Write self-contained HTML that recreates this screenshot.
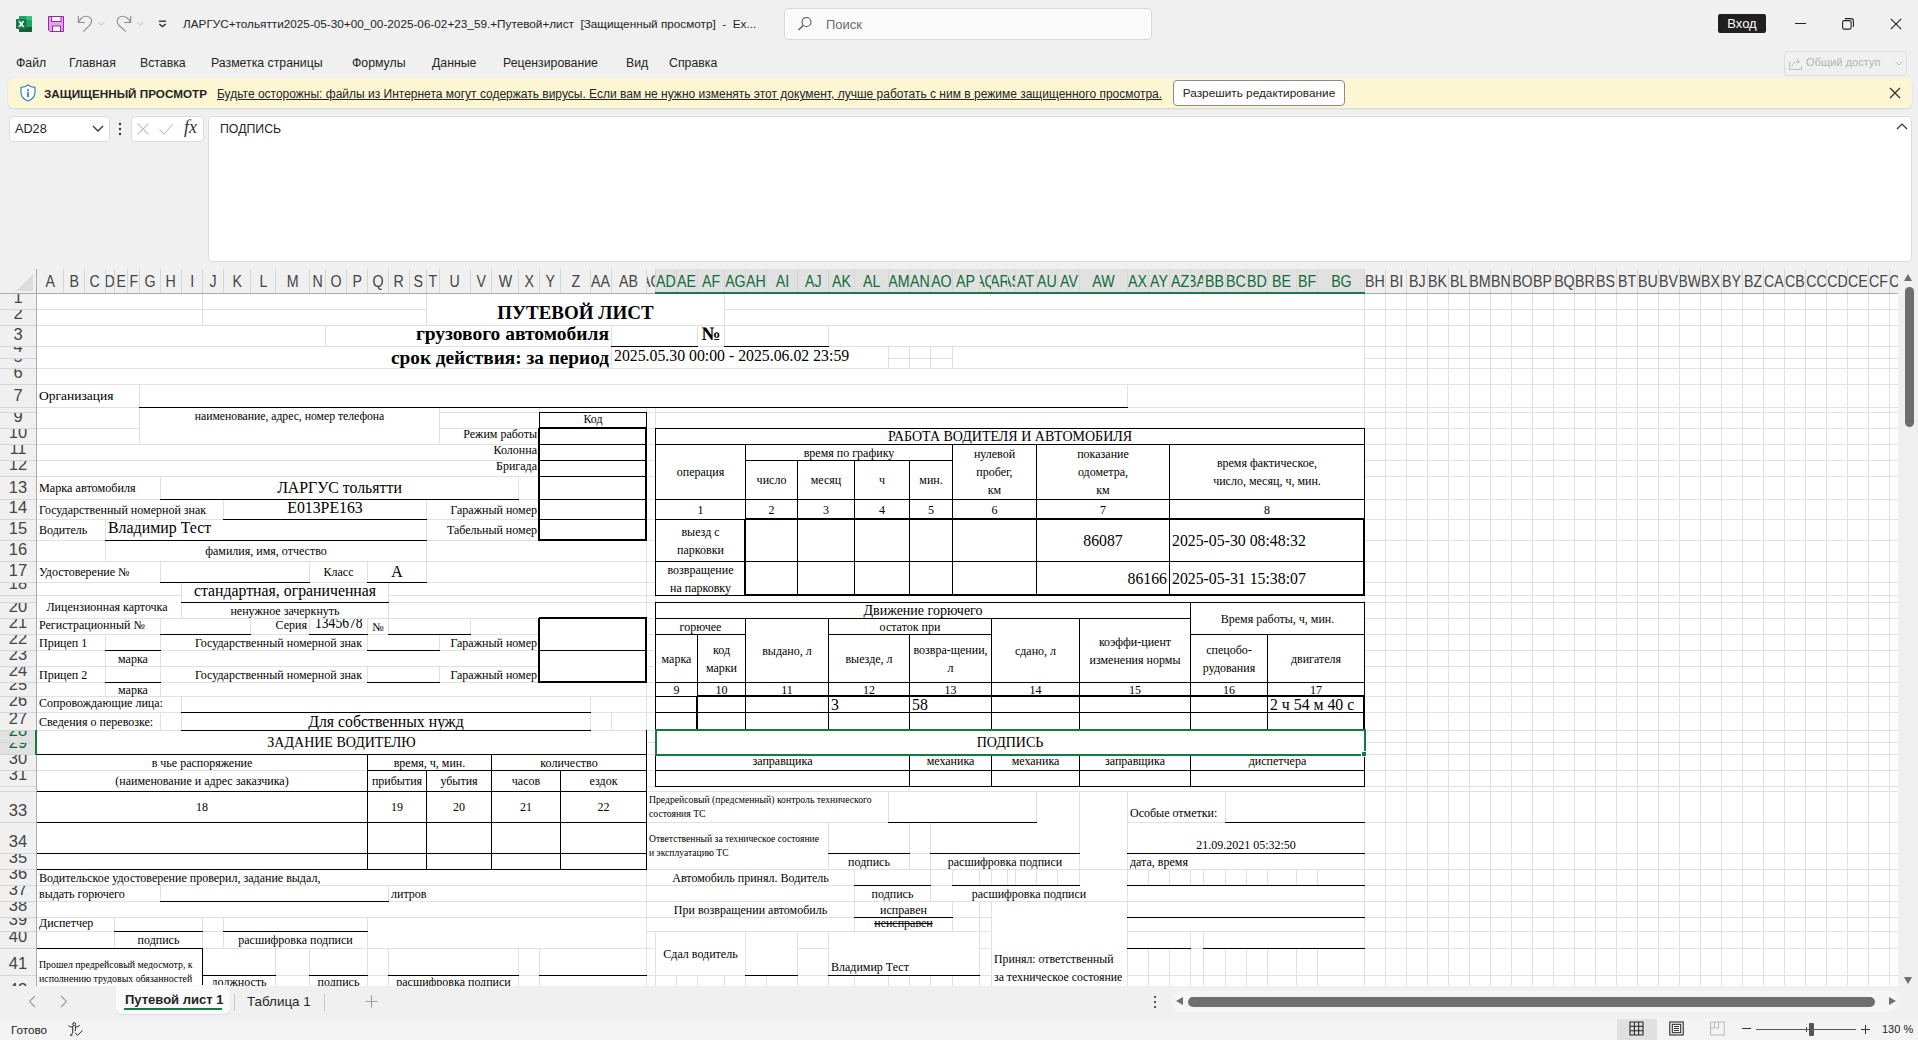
<!DOCTYPE html>
<html><head><meta charset="utf-8">
<style>
*{box-sizing:border-box;margin:0;padding:0}
html,body{width:1918px;height:1040px;overflow:hidden;background:#f0f0f0;font-family:"Liberation Sans",sans-serif;color:#242424}
.a{position:absolute}
#sheetclip{position:absolute;left:37px;top:294px;width:1861px;height:692px;overflow:hidden;background:#fff}
#sheet{position:absolute;left:-37px;top:-294px;width:1918px;height:1040px}
#sheet div{position:absolute}
.gv{top:294px;width:1px;height:700px;background:#e1e1e1}
.gh{left:37px;height:1px;width:1870px;background:#e1e1e1}
.m{background:#fff}
.b{background:#000}
.t{display:flex;font-family:"Liberation Serif",serif;color:#000;white-space:nowrap;line-height:1;overflow:visible}
.t span{display:block}
.ch{position:absolute;top:269px;height:24px;overflow:hidden;display:flex;justify-content:center;align-items:center;font-size:15.8px;color:#444;border-right:1px solid #d6d6d6;padding-top:2px}
.ch span{white-space:nowrap;display:block;transform:scaleX(0.9)}
.ch.sel{background:#e1e1e1;color:#0e6b37}
.rh{position:absolute;left:0;width:36px;overflow:hidden;font-size:16.5px;color:#444;border-bottom:1px solid #d6d6d6}
.rh span{position:absolute;left:0;width:36px;bottom:2px;height:20px;line-height:20px;text-align:center;display:block}
.rh.sel{background:#e1e1e1;color:#0e6b37}
.menu span{position:absolute;top:56px;font-size:12.3px;color:#242424}
</style></head><body>
<!-- title bar -->
<svg class="a" style="left:16px;top:16px" width="16" height="16" viewBox="0 0 16 16">
 <rect x="3" y="0" width="13" height="16" rx="1" fill="#1e9e5e"/>
 <rect x="9.5" y="0" width="6.5" height="4.5" fill="#33c481"/>
 <rect x="3" y="0" width="6.5" height="4.5" fill="#21a366"/>
 <rect x="9.5" y="4.5" width="6.5" height="5.5" fill="#21a366"/>
 <rect x="3" y="11" width="13" height="5" rx="1" fill="#185c37"/>
 <rect x="0" y="2.9" width="10.6" height="10.1" rx="1" fill="#107c41"/>
 <path d="M3 5 L7.6 11 M7.6 5 L3 11" stroke="#fff" stroke-width="1.5"/>
</svg>
<svg class="a" style="left:48px;top:16px" width="16" height="16" viewBox="0 0 16 16">
 <path d="M0.5 0.5 H15.5 V15.5 H2 L0.5 14 Z" fill="#dfa6e6" stroke="#9b27a8" stroke-width="1"/>
 <rect x="3.5" y="0.5" width="9.5" height="5" fill="#fff" stroke="#9b27a8" stroke-width="1"/>
 <rect x="4.5" y="10" width="8" height="5.5" fill="#fff" stroke="#9b27a8" stroke-width="1"/>
</svg>
<svg class="a" style="left:76px;top:15px" width="32" height="18" viewBox="0 0 32 18">
 <path d="M2.3 1 V7.5 H8.9" stroke="#8a8a8a" stroke-width="1.1" fill="none"/>
 <path d="M2.6 7.2 C4.5 3.5 7 1.3 10.2 1.3 C13.3 1.3 15.6 3.5 15.6 6 C15.6 7.5 15 8.8 14 10 L7.3 16.6" stroke="#8a8a8a" stroke-width="1.1" fill="none"/>
 <path d="M22.2 7 L25.3 10.1 L28.4 7" stroke="#b5b5b5" stroke-width="0.9" fill="none"/>
</svg>
<svg class="a" style="left:115px;top:15px" width="32" height="18" viewBox="0 0 32 18">
 <path d="M15.7 1 V7.5 H9.2" stroke="#8a8a8a" stroke-width="1.1" fill="none"/>
 <path d="M15.4 7.2 C13.5 3.5 11 1.3 7.8 1.3 C4.7 1.3 2.2 3.5 2.2 6 C2.2 7.5 2.7 8.8 3.7 10 L10.8 16.6" stroke="#8a8a8a" stroke-width="1.1" fill="none"/>
 <path d="M22.3 7 L25.4 10.1 L28.5 7" stroke="#b5b5b5" stroke-width="0.9" fill="none"/>
</svg>
<svg class="a" style="left:157px;top:19px" width="10" height="10" viewBox="0 0 10 10">
 <path d="M1.9 2.2 H8.9" stroke="#222" stroke-width="1.3"/><path d="M2.4 5.1 L5.5 7.7 L8.7 5.1" stroke="#222" stroke-width="1.3" fill="none"/>
</svg>
<div class="a" style="left:183px;top:17px;font-size:11.75px;color:#242424;white-space:nowrap">ЛАРГУС+тольятти2025-05-30+00_00-2025-06-02+23_59.+Путевой+лист&nbsp; [Защищенный просмотр]&nbsp; -&nbsp; Ex...</div>
<div class="a" style="left:784px;top:8px;width:368px;height:32px;background:#fafafa;border:1px solid #d9d9d9;border-radius:4px"></div>
<svg class="a" style="left:797px;top:16px" width="16" height="16" viewBox="0 0 16 16"><circle cx="9.5" cy="6" r="4.5" stroke="#555" stroke-width="1.1" fill="none"/><path d="M6.3 9.2 L1.5 14" stroke="#555" stroke-width="1.3"/></svg>
<div class="a" style="left:826px;top:17px;font-size:13px;color:#6b6b6b">Поиск</div>
<div class="a" style="left:1718px;top:14px;width:48px;height:19px;background:#202020;border-radius:2px;color:#fff;font-size:13px;text-align:center;line-height:19px">Вход</div>
<div class="a" style="left:1795px;top:23px;width:11px;height:1px;background:#222"></div>
<svg class="a" style="left:1842px;top:18px" width="12" height="12" viewBox="0 0 12 12"><rect x="0.6" y="2.6" width="8.5" height="8.5" rx="1.5" stroke="#222" stroke-width="1.1" fill="none"/><path d="M2.8 0.6 H9 Q11.4 0.6 11.4 3 V9" stroke="#222" stroke-width="1.1" fill="none"/></svg>
<svg class="a" style="left:1890px;top:18px" width="12" height="12" viewBox="0 0 12 12"><path d="M0.8 0.8 L11.2 11.2 M11.2 0.8 L0.8 11.2" stroke="#222" stroke-width="1.1"/></svg>
<!-- menu -->
<div class="menu">
<span style="left:16px">Файл</span><span style="left:69px">Главная</span><span style="left:140px">Вставка</span><span style="left:211px">Разметка страницы</span><span style="left:352px">Формулы</span><span style="left:432px">Данные</span><span style="left:503px">Рецензирование</span><span style="left:626px">Вид</span><span style="left:669px">Справка</span>
</div>
<div class="a" style="left:1784px;top:51px;width:123px;height:25px;border:1px solid #dedede;border-radius:4px"></div>
<svg class="a" style="left:1789px;top:57px" width="14" height="13" viewBox="0 0 14 13"><path d="M0.5 5 V12.5 H12.5 V9" stroke="#bdbdbd" stroke-width="1" fill="none"/><path d="M3 10 C3 6 6 4.5 10 4.5 M7.5 1.5 L10.5 4.5 L7.5 7.5" stroke="#bdbdbd" stroke-width="1" fill="none"/></svg>
<div class="a" style="left:1806px;top:56px;font-size:11.1px;color:#b3b3b3;white-space:nowrap">Общий доступ</div>
<svg class="a" style="left:1895px;top:61px" width="8" height="5" viewBox="0 0 8 5"><path d="M0.5 0.5 L4 4 L7.5 0.5" stroke="#bdbdbd" stroke-width="1" fill="none"/></svg>
<!-- protected view bar -->
<div class="a" style="left:8px;top:78px;width:1904px;height:30px;background:#fdf6d3;border-radius:6px;box-shadow:0 1px 2px rgba(0,0,0,0.12)"></div>
<svg class="a" style="left:20px;top:84px" width="16" height="18" viewBox="0 0 16 18"><path d="M8 1 C5.5 2.8 3.5 3.3 1 3.3 V8.5 C1 13 4 15.5 8 17 C12 15.5 15 13 15 8.5 V3.3 C12.5 3.3 10.5 2.8 8 1 Z" stroke="#2f7fd1" stroke-width="1.2" fill="#fff"/><circle cx="8" cy="6.2" r="1.1" fill="#2f7fd1"/><rect x="7.1" y="8.2" width="1.8" height="5" fill="#2f7fd1"/></svg>
<div class="a" style="left:44px;top:87px;font-size:11.7px;font-weight:bold;color:#242424;white-space:nowrap">ЗАЩИЩЕННЫЙ ПРОСМОТР</div>
<div class="a" style="left:217px;top:87px;font-size:12px;color:#242424;text-decoration:underline;white-space:nowrap">Будьте осторожны: файлы из Интернета могут содержать вирусы. Если вам не нужно изменять этот документ, лучше работать с ним в режиме защищенного просмотра.</div>
<div class="a" style="left:1173px;top:80px;width:172px;height:26px;background:#fff;border:1px solid #8a8a8a;border-radius:4px;font-size:11.8px;color:#242424;text-align:center;line-height:24px;white-space:nowrap">Разрешить редактирование</div>
<svg class="a" style="left:1889px;top:87px" width="12" height="12" viewBox="0 0 12 12"><path d="M1 1 L11 11 M11 1 L1 11" stroke="#333" stroke-width="1.3"/></svg>
<!-- formula bar -->
<div class="a" style="left:9px;top:116px;width:101px;height:26px;background:#fff;border:1px solid #dcdcdc;border-radius:4px"></div>
<div class="a" style="left:15px;top:122px;font-size:12.7px;color:#242424">AD28</div>
<svg class="a" style="left:92px;top:125px" width="12" height="8" viewBox="0 0 12 8"><path d="M1 1 L6 6 L11 1" stroke="#333" stroke-width="1.3" fill="none"/></svg>
<svg class="a" style="left:118px;top:121px" width="4" height="16" viewBox="0 0 4 16"><circle cx="2" cy="3" r="1.2" fill="#333"/><circle cx="2" cy="8" r="1.2" fill="#333"/><circle cx="2" cy="13" r="1.2" fill="#333"/></svg>
<div class="a" style="left:131px;top:116px;width:73px;height:26px;background:#fff;border:1px solid #dcdcdc;border-radius:4px"></div>
<svg class="a" style="left:136px;top:122px" width="14" height="14" viewBox="0 0 14 14"><path d="M1.5 1.5 L12.5 12.5 M12.5 1.5 L1.5 12.5" stroke="#c4c4c4" stroke-width="1.1"/></svg>
<svg class="a" style="left:158px;top:122px" width="16" height="14" viewBox="0 0 16 14"><path d="M1.5 7.5 L6 12 L15 2" stroke="#c4c4c4" stroke-width="1.1" fill="none"/></svg>
<div class="a" style="left:184px;top:117px;font-family:'Liberation Serif',serif;font-style:italic;font-size:18px;color:#333">fx</div>
<div class="a" style="left:208px;top:116px;width:1704px;height:146px;background:#fff;border:1px solid #dcdcdc;border-radius:4px 4px 4px 4px"></div>
<div class="a" style="left:220px;top:122px;font-size:12.3px;color:#242424">ПОДПИСЬ</div>
<svg class="a" style="left:1896px;top:122px" width="12" height="8" viewBox="0 0 12 8"><path d="M1 7 L6 2 L11 7" stroke="#333" stroke-width="1.2" fill="none"/></svg>
<!-- headers -->
<div class="a" style="left:0;top:269px;width:1898px;height:25px;background:#f0f0f0"></div>
<svg class="a" style="left:16px;top:274px" width="17" height="17" viewBox="0 0 17 17"><path d="M17 0 V17 H0 Z" fill="#dcdcdc"/></svg>
<div class="ch" style="left:37px;width:27px"><span>A</span></div>
<div class="ch" style="left:64px;width:21px"><span>B</span></div>
<div class="ch" style="left:85px;width:21px"><span>C</span></div>
<div class="ch" style="left:106px;width:9px"><span>D</span></div>
<div class="ch" style="left:115px;width:13px"><span>E</span></div>
<div class="ch" style="left:128px;width:12px"><span>F</span></div>
<div class="ch" style="left:140px;width:21px"><span>G</span></div>
<div class="ch" style="left:161px;width:21px"><span>H</span></div>
<div class="ch" style="left:182px;width:21px"><span>I</span></div>
<div class="ch" style="left:203px;width:21px"><span>J</span></div>
<div class="ch" style="left:224px;width:27px"><span>K</span></div>
<div class="ch" style="left:251px;width:25px"><span>L</span></div>
<div class="ch" style="left:276px;width:34px"><span>M</span></div>
<div class="ch" style="left:310px;width:16px"><span>N</span></div>
<div class="ch" style="left:326px;width:21px"><span>O</span></div>
<div class="ch" style="left:347px;width:21px"><span>P</span></div>
<div class="ch" style="left:368px;width:21px"><span>Q</span></div>
<div class="ch" style="left:389px;width:21px"><span>R</span></div>
<div class="ch" style="left:410px;width:17px"><span>S</span></div>
<div class="ch" style="left:427px;width:13px"><span>T</span></div>
<div class="ch" style="left:440px;width:31px"><span>U</span></div>
<div class="ch" style="left:471px;width:21px"><span>V</span></div>
<div class="ch" style="left:492px;width:27px"><span>W</span></div>
<div class="ch" style="left:519px;width:21px"><span>X</span></div>
<div class="ch" style="left:540px;width:21px"><span>Y</span></div>
<div class="ch" style="left:561px;width:30px"><span>Z</span></div>
<div class="ch" style="left:591px;width:21px"><span>AA</span></div>
<div class="ch" style="left:612px;width:35px"><span>AB</span></div>
<div class="ch" style="left:647px;width:9px"><span>AC</span></div>
<div class="ch sel" style="left:656px;width:21px"><span>AD</span></div>
<div class="ch sel" style="left:677px;width:21px"><span>AE</span></div>
<div class="ch sel" style="left:698px;width:27px"><span>AF</span></div>
<div class="ch sel" style="left:725px;width:21px"><span>AG</span></div>
<div class="ch sel" style="left:746px;width:21px"><span>AH</span></div>
<div class="ch sel" style="left:767px;width:31px"><span>AI</span></div>
<div class="ch sel" style="left:798px;width:31px"><span>AJ</span></div>
<div class="ch sel" style="left:829px;width:26px"><span>AK</span></div>
<div class="ch sel" style="left:855px;width:34px"><span>AL</span></div>
<div class="ch sel" style="left:889px;width:21px"><span>AM</span></div>
<div class="ch sel" style="left:910px;width:21px"><span>AN</span></div>
<div class="ch sel" style="left:931px;width:22px"><span>AO</span></div>
<div class="ch sel" style="left:953px;width:27px"><span>AP</span></div>
<div class="ch sel" style="left:980px;width:12px"><span>AQ</span></div>
<div class="ch sel" style="left:992px;width:16px"><span>AR</span></div>
<div class="ch sel" style="left:1008px;width:8px"><span>AS</span></div>
<div class="ch sel" style="left:1016px;width:21px"><span>AT</span></div>
<div class="ch sel" style="left:1037px;width:21px"><span>AU</span></div>
<div class="ch sel" style="left:1058px;width:22px"><span>AV</span></div>
<div class="ch sel" style="left:1080px;width:48px"><span>AW</span></div>
<div class="ch sel" style="left:1128px;width:21px"><span>AX</span></div>
<div class="ch sel" style="left:1149px;width:21px"><span>AY</span></div>
<div class="ch sel" style="left:1170px;width:21px"><span>AZ</span></div>
<div class="ch sel" style="left:1191px;width:13px"><span>BA</span></div>
<div class="ch sel" style="left:1204px;width:22px"><span>BB</span></div>
<div class="ch sel" style="left:1226px;width:21px"><span>BC</span></div>
<div class="ch sel" style="left:1247px;width:21px"><span>BD</span></div>
<div class="ch sel" style="left:1268px;width:29px"><span>BE</span></div>
<div class="ch sel" style="left:1297px;width:21px"><span>BF</span></div>
<div class="ch sel" style="left:1318px;width:47px"><span>BG</span></div>
<div class="ch" style="left:1365px;width:21px"><span>BH</span></div>
<div class="ch" style="left:1386px;width:21px"><span>BI</span></div>
<div class="ch" style="left:1407px;width:21px"><span>BJ</span></div>
<div class="ch" style="left:1428px;width:21px"><span>BK</span></div>
<div class="ch" style="left:1449px;width:21px"><span>BL</span></div>
<div class="ch" style="left:1470px;width:21px"><span>BM</span></div>
<div class="ch" style="left:1491px;width:21px"><span>BN</span></div>
<div class="ch" style="left:1512px;width:21px"><span>BO</span></div>
<div class="ch" style="left:1533px;width:21px"><span>BP</span></div>
<div class="ch" style="left:1554px;width:21px"><span>BQ</span></div>
<div class="ch" style="left:1575px;width:21px"><span>BR</span></div>
<div class="ch" style="left:1596px;width:21px"><span>BS</span></div>
<div class="ch" style="left:1617px;width:21px"><span>BT</span></div>
<div class="ch" style="left:1638px;width:21px"><span>BU</span></div>
<div class="ch" style="left:1659px;width:21px"><span>BV</span></div>
<div class="ch" style="left:1680px;width:21px"><span>BW</span></div>
<div class="ch" style="left:1701px;width:21px"><span>BX</span></div>
<div class="ch" style="left:1722px;width:21px"><span>BY</span></div>
<div class="ch" style="left:1743px;width:21px"><span>BZ</span></div>
<div class="ch" style="left:1764px;width:21px"><span>CA</span></div>
<div class="ch" style="left:1785px;width:21px"><span>CB</span></div>
<div class="ch" style="left:1806px;width:21px"><span>CC</span></div>
<div class="ch" style="left:1827px;width:21px"><span>CD</span></div>
<div class="ch" style="left:1848px;width:21px"><span>CE</span></div>
<div class="ch" style="left:1869px;width:21px"><span>CF</span></div>
<div class="ch" style="left:1890px;width:21px"><span>CG</span></div>
<div class="a" style="left:0;top:293px;width:1898px;height:1px;background:#ababab"></div>
<div class="a" style="left:655px;top:292px;width:710px;height:2px;background:#107c41"></div>
<div class="rh" style="top:294px;height:16px"><span>1</span></div>
<div class="rh" style="top:310px;height:16px"><span>2</span></div>
<div class="rh" style="top:326px;height:21px"><span>3</span></div>
<div class="rh" style="top:347px;height:12px"><span>4</span></div>
<div class="rh" style="top:359px;height:10px"><span>5</span></div>
<div class="rh" style="top:369px;height:16px"><span>6</span></div>
<div class="rh" style="top:385px;height:23px"><span>7</span></div>
<div class="rh" style="top:408px;height:5px"><span>8</span></div>
<div class="rh" style="top:413px;height:16px"><span>9</span></div>
<div class="rh" style="top:429px;height:16px"><span>10</span></div>
<div class="rh" style="top:445px;height:16px"><span>11</span></div>
<div class="rh" style="top:461px;height:16px"><span>12</span></div>
<div class="rh" style="top:477px;height:23px"><span>13</span></div>
<div class="rh" style="top:500px;height:20px"><span>14</span></div>
<div class="rh" style="top:520px;height:21px"><span>15</span></div>
<div class="rh" style="top:541px;height:21px"><span>16</span></div>
<div class="rh" style="top:562px;height:21px"><span>17</span></div>
<div class="rh" style="top:583px;height:13px"><span>18</span></div>
<div class="rh" style="top:596px;height:7px"><span>19</span></div>
<div class="rh" style="top:603px;height:16px"><span>20</span></div>
<div class="rh" style="top:619px;height:16px"><span>21</span></div>
<div class="rh" style="top:635px;height:16px"><span>22</span></div>
<div class="rh" style="top:651px;height:16px"><span>23</span></div>
<div class="rh" style="top:667px;height:16px"><span>24</span></div>
<div class="rh" style="top:683px;height:14px"><span>25</span></div>
<div class="rh" style="top:697px;height:16px"><span>26</span></div>
<div class="rh" style="top:713px;height:18px"><span>27</span></div>
<div class="rh sel" style="top:731px;height:12px"><span>28</span></div>
<div class="rh sel" style="top:743px;height:12px"><span>29</span></div>
<div class="rh" style="top:755px;height:16px"><span>30</span></div>
<div class="rh" style="top:771px;height:16px"><span>31</span></div>
<div class="rh" style="top:787px;height:5px"><span>32</span></div>
<div class="rh" style="top:792px;height:31px"><span>33</span></div>
<div class="rh" style="top:823px;height:31px"><span>34</span></div>
<div class="rh" style="top:854px;height:16px"><span>35</span></div>
<div class="rh" style="top:870px;height:16px"><span>36</span></div>
<div class="rh" style="top:886px;height:16px"><span>37</span></div>
<div class="rh" style="top:902px;height:16px"><span>38</span></div>
<div class="rh" style="top:918px;height:14px"><span>39</span></div>
<div class="rh" style="top:932px;height:17px"><span>40</span></div>
<div class="rh" style="top:949px;height:27px"><span>41</span></div>
<div class="rh" style="top:976px;height:26px"><span>42</span></div>
<div class="a" style="left:36px;top:269px;width:1px;height:717px;background:#ababab"></div>
<div class="a" style="left:35px;top:730px;width:2px;height:25px;background:#107c41"></div>
<div id="sheetclip"><div id="sheet">
<div class="gv" style="left:63px"></div>
<div class="gv" style="left:84px"></div>
<div class="gv" style="left:105px"></div>
<div class="gv" style="left:114px"></div>
<div class="gv" style="left:127px"></div>
<div class="gv" style="left:139px"></div>
<div class="gv" style="left:160px"></div>
<div class="gv" style="left:181px"></div>
<div class="gv" style="left:202px"></div>
<div class="gv" style="left:223px"></div>
<div class="gv" style="left:250px"></div>
<div class="gv" style="left:275px"></div>
<div class="gv" style="left:309px"></div>
<div class="gv" style="left:325px"></div>
<div class="gv" style="left:346px"></div>
<div class="gv" style="left:367px"></div>
<div class="gv" style="left:388px"></div>
<div class="gv" style="left:409px"></div>
<div class="gv" style="left:426px"></div>
<div class="gv" style="left:439px"></div>
<div class="gv" style="left:470px"></div>
<div class="gv" style="left:491px"></div>
<div class="gv" style="left:518px"></div>
<div class="gv" style="left:539px"></div>
<div class="gv" style="left:560px"></div>
<div class="gv" style="left:590px"></div>
<div class="gv" style="left:611px"></div>
<div class="gv" style="left:646px"></div>
<div class="gv" style="left:655px"></div>
<div class="gv" style="left:676px"></div>
<div class="gv" style="left:697px"></div>
<div class="gv" style="left:724px"></div>
<div class="gv" style="left:745px"></div>
<div class="gv" style="left:766px"></div>
<div class="gv" style="left:797px"></div>
<div class="gv" style="left:828px"></div>
<div class="gv" style="left:854px"></div>
<div class="gv" style="left:888px"></div>
<div class="gv" style="left:909px"></div>
<div class="gv" style="left:930px"></div>
<div class="gv" style="left:952px"></div>
<div class="gv" style="left:979px"></div>
<div class="gv" style="left:991px"></div>
<div class="gv" style="left:1007px"></div>
<div class="gv" style="left:1015px"></div>
<div class="gv" style="left:1036px"></div>
<div class="gv" style="left:1057px"></div>
<div class="gv" style="left:1079px"></div>
<div class="gv" style="left:1127px"></div>
<div class="gv" style="left:1148px"></div>
<div class="gv" style="left:1169px"></div>
<div class="gv" style="left:1190px"></div>
<div class="gv" style="left:1203px"></div>
<div class="gv" style="left:1225px"></div>
<div class="gv" style="left:1246px"></div>
<div class="gv" style="left:1267px"></div>
<div class="gv" style="left:1296px"></div>
<div class="gv" style="left:1317px"></div>
<div class="gv" style="left:1364px"></div>
<div class="gv" style="left:1385px"></div>
<div class="gv" style="left:1406px"></div>
<div class="gv" style="left:1427px"></div>
<div class="gv" style="left:1448px"></div>
<div class="gv" style="left:1469px"></div>
<div class="gv" style="left:1490px"></div>
<div class="gv" style="left:1511px"></div>
<div class="gv" style="left:1532px"></div>
<div class="gv" style="left:1553px"></div>
<div class="gv" style="left:1574px"></div>
<div class="gv" style="left:1595px"></div>
<div class="gv" style="left:1616px"></div>
<div class="gv" style="left:1637px"></div>
<div class="gv" style="left:1658px"></div>
<div class="gv" style="left:1679px"></div>
<div class="gv" style="left:1700px"></div>
<div class="gv" style="left:1721px"></div>
<div class="gv" style="left:1742px"></div>
<div class="gv" style="left:1763px"></div>
<div class="gv" style="left:1784px"></div>
<div class="gv" style="left:1805px"></div>
<div class="gv" style="left:1826px"></div>
<div class="gv" style="left:1847px"></div>
<div class="gv" style="left:1868px"></div>
<div class="gv" style="left:1889px"></div>
<div class="gh" style="top:309px"></div>
<div class="gh" style="top:325px"></div>
<div class="gh" style="top:346px"></div>
<div class="gh" style="top:358px"></div>
<div class="gh" style="top:368px"></div>
<div class="gh" style="top:384px"></div>
<div class="gh" style="top:407px"></div>
<div class="gh" style="top:412px"></div>
<div class="gh" style="top:428px"></div>
<div class="gh" style="top:444px"></div>
<div class="gh" style="top:460px"></div>
<div class="gh" style="top:476px"></div>
<div class="gh" style="top:499px"></div>
<div class="gh" style="top:519px"></div>
<div class="gh" style="top:540px"></div>
<div class="gh" style="top:561px"></div>
<div class="gh" style="top:582px"></div>
<div class="gh" style="top:595px"></div>
<div class="gh" style="top:602px"></div>
<div class="gh" style="top:618px"></div>
<div class="gh" style="top:634px"></div>
<div class="gh" style="top:650px"></div>
<div class="gh" style="top:666px"></div>
<div class="gh" style="top:682px"></div>
<div class="gh" style="top:696px"></div>
<div class="gh" style="top:712px"></div>
<div class="gh" style="top:730px"></div>
<div class="gh" style="top:742px"></div>
<div class="gh" style="top:754px"></div>
<div class="gh" style="top:770px"></div>
<div class="gh" style="top:786px"></div>
<div class="gh" style="top:791px"></div>
<div class="gh" style="top:822px"></div>
<div class="gh" style="top:853px"></div>
<div class="gh" style="top:869px"></div>
<div class="gh" style="top:885px"></div>
<div class="gh" style="top:901px"></div>
<div class="gh" style="top:917px"></div>
<div class="gh" style="top:931px"></div>
<div class="gh" style="top:948px"></div>
<div class="gh" style="top:975px"></div>
<div class="m" style="left:37px;top:294px;width:165px;height:15px"></div>
<div class="m" style="left:37px;top:310px;width:165px;height:15px"></div>
<div class="m" style="left:203px;top:294px;width:223px;height:15px"></div>
<div class="m" style="left:203px;top:310px;width:223px;height:15px"></div>
<div class="m" style="left:427px;top:294px;width:297px;height:31px"></div>
<div class="m" style="left:725px;top:294px;width:639px;height:15px"></div>
<div class="m" style="left:725px;top:310px;width:639px;height:15px"></div>
<div class="m" style="left:37px;top:326px;width:288px;height:20px"></div>
<div class="m" style="left:326px;top:326px;width:285px;height:20px"></div>
<div class="m" style="left:612px;top:326px;width:85px;height:20px"></div>
<div class="m" style="left:725px;top:326px;width:103px;height:20px"></div>
<div class="m" style="left:829px;top:326px;width:535px;height:20px"></div>
<div class="m" style="left:37px;top:347px;width:574px;height:21px"></div>
<div class="m" style="left:612px;top:347px;width:276px;height:21px"></div>
<div class="m" style="left:953px;top:347px;width:411px;height:21px"></div>
<div class="m" style="left:37px;top:369px;width:1327px;height:15px"></div>
<div class="m" style="left:37px;top:385px;width:102px;height:22px"></div>
<div class="m" style="left:140px;top:385px;width:987px;height:22px"></div>
<div class="m" style="left:1128px;top:385px;width:236px;height:22px"></div>
<div class="m" style="left:37px;top:408px;width:102px;height:20px"></div>
<div class="m" style="left:37px;top:429px;width:102px;height:15px"></div>
<div class="m" style="left:140px;top:408px;width:299px;height:36px"></div>
<div class="m" style="left:440px;top:408px;width:99px;height:4px"></div>
<div class="m" style="left:440px;top:413px;width:99px;height:15px"></div>
<div class="m" style="left:440px;top:429px;width:99px;height:15px"></div>
<div class="m" style="left:540px;top:408px;width:106px;height:4px"></div>
<div class="m" style="left:540px;top:413px;width:106px;height:15px"></div>
<div class="m" style="left:656px;top:408px;width:708px;height:4px"></div>
<div class="m" style="left:656px;top:413px;width:708px;height:15px"></div>
<div class="m" style="left:540px;top:429px;width:106px;height:15px"></div>
<div class="m" style="left:540px;top:445px;width:106px;height:15px"></div>
<div class="m" style="left:540px;top:461px;width:106px;height:15px"></div>
<div class="m" style="left:540px;top:477px;width:106px;height:22px"></div>
<div class="m" style="left:540px;top:500px;width:106px;height:19px"></div>
<div class="m" style="left:540px;top:520px;width:106px;height:20px"></div>
<div class="m" style="left:656px;top:429px;width:708px;height:15px"></div>
<div class="m" style="left:37px;top:445px;width:502px;height:15px"></div>
<div class="m" style="left:37px;top:461px;width:502px;height:15px"></div>
<div class="m" style="left:656px;top:445px;width:89px;height:54px"></div>
<div class="m" style="left:746px;top:445px;width:206px;height:15px"></div>
<div class="m" style="left:746px;top:461px;width:51px;height:38px"></div>
<div class="m" style="left:798px;top:461px;width:56px;height:38px"></div>
<div class="m" style="left:855px;top:461px;width:54px;height:38px"></div>
<div class="m" style="left:910px;top:461px;width:42px;height:38px"></div>
<div class="m" style="left:953px;top:445px;width:83px;height:54px"></div>
<div class="m" style="left:1037px;top:445px;width:132px;height:54px"></div>
<div class="m" style="left:1170px;top:445px;width:194px;height:54px"></div>
<div class="m" style="left:656px;top:500px;width:89px;height:19px"></div>
<div class="m" style="left:746px;top:500px;width:51px;height:19px"></div>
<div class="m" style="left:798px;top:500px;width:56px;height:19px"></div>
<div class="m" style="left:855px;top:500px;width:54px;height:19px"></div>
<div class="m" style="left:910px;top:500px;width:42px;height:19px"></div>
<div class="m" style="left:953px;top:500px;width:83px;height:19px"></div>
<div class="m" style="left:1037px;top:500px;width:132px;height:19px"></div>
<div class="m" style="left:1170px;top:500px;width:194px;height:19px"></div>
<div class="m" style="left:656px;top:520px;width:89px;height:41px"></div>
<div class="m" style="left:746px;top:520px;width:51px;height:41px"></div>
<div class="m" style="left:798px;top:520px;width:56px;height:41px"></div>
<div class="m" style="left:855px;top:520px;width:54px;height:41px"></div>
<div class="m" style="left:910px;top:520px;width:42px;height:41px"></div>
<div class="m" style="left:953px;top:520px;width:83px;height:41px"></div>
<div class="m" style="left:1037px;top:520px;width:132px;height:41px"></div>
<div class="m" style="left:1170px;top:520px;width:194px;height:41px"></div>
<div class="m" style="left:656px;top:562px;width:89px;height:33px"></div>
<div class="m" style="left:746px;top:562px;width:51px;height:33px"></div>
<div class="m" style="left:798px;top:562px;width:56px;height:33px"></div>
<div class="m" style="left:855px;top:562px;width:54px;height:33px"></div>
<div class="m" style="left:910px;top:562px;width:42px;height:33px"></div>
<div class="m" style="left:953px;top:562px;width:83px;height:33px"></div>
<div class="m" style="left:1037px;top:562px;width:132px;height:33px"></div>
<div class="m" style="left:1170px;top:562px;width:194px;height:33px"></div>
<div class="m" style="left:656px;top:596px;width:708px;height:6px"></div>
<div class="m" style="left:37px;top:477px;width:123px;height:22px"></div>
<div class="m" style="left:161px;top:477px;width:357px;height:22px"></div>
<div class="m" style="left:37px;top:500px;width:186px;height:19px"></div>
<div class="m" style="left:224px;top:500px;width:202px;height:19px"></div>
<div class="m" style="left:427px;top:500px;width:112px;height:19px"></div>
<div class="m" style="left:37px;top:520px;width:68px;height:20px"></div>
<div class="m" style="left:106px;top:520px;width:320px;height:20px"></div>
<div class="m" style="left:427px;top:520px;width:112px;height:20px"></div>
<div class="m" style="left:37px;top:541px;width:68px;height:20px"></div>
<div class="m" style="left:106px;top:541px;width:320px;height:20px"></div>
<div class="m" style="left:427px;top:541px;width:219px;height:20px"></div>
<div class="m" style="left:37px;top:562px;width:123px;height:20px"></div>
<div class="m" style="left:161px;top:562px;width:148px;height:20px"></div>
<div class="m" style="left:310px;top:562px;width:57px;height:20px"></div>
<div class="m" style="left:368px;top:562px;width:58px;height:20px"></div>
<div class="m" style="left:427px;top:562px;width:219px;height:20px"></div>
<div class="m" style="left:37px;top:583px;width:144px;height:12px"></div>
<div class="m" style="left:182px;top:583px;width:206px;height:19px"></div>
<div class="m" style="left:389px;top:583px;width:257px;height:12px"></div>
<div class="m" style="left:389px;top:596px;width:257px;height:6px"></div>
<div class="m" style="left:37px;top:596px;width:144px;height:22px"></div>
<div class="m" style="left:182px;top:603px;width:206px;height:15px"></div>
<div class="m" style="left:389px;top:603px;width:257px;height:15px"></div>
<div class="m" style="left:37px;top:619px;width:123px;height:15px"></div>
<div class="m" style="left:161px;top:619px;width:89px;height:15px"></div>
<div class="m" style="left:251px;top:619px;width:58px;height:15px"></div>
<div class="m" style="left:310px;top:619px;width:57px;height:15px"></div>
<div class="m" style="left:389px;top:619px;width:81px;height:15px"></div>
<div class="m" style="left:471px;top:619px;width:68px;height:15px"></div>
<div class="m" style="left:540px;top:619px;width:106px;height:31px"></div>
<div class="m" style="left:37px;top:635px;width:68px;height:15px"></div>
<div class="m" style="left:106px;top:635px;width:54px;height:15px"></div>
<div class="m" style="left:161px;top:635px;width:206px;height:15px"></div>
<div class="m" style="left:368px;top:635px;width:71px;height:15px"></div>
<div class="m" style="left:440px;top:635px;width:99px;height:15px"></div>
<div class="m" style="left:37px;top:651px;width:68px;height:15px"></div>
<div class="m" style="left:106px;top:651px;width:54px;height:15px"></div>
<div class="m" style="left:161px;top:651px;width:378px;height:15px"></div>
<div class="m" style="left:540px;top:651px;width:106px;height:31px"></div>
<div class="m" style="left:37px;top:667px;width:68px;height:15px"></div>
<div class="m" style="left:106px;top:667px;width:54px;height:15px"></div>
<div class="m" style="left:161px;top:667px;width:206px;height:15px"></div>
<div class="m" style="left:368px;top:667px;width:71px;height:15px"></div>
<div class="m" style="left:440px;top:667px;width:99px;height:15px"></div>
<div class="m" style="left:37px;top:683px;width:68px;height:13px"></div>
<div class="m" style="left:106px;top:683px;width:54px;height:13px"></div>
<div class="m" style="left:161px;top:683px;width:485px;height:13px"></div>
<div class="m" style="left:37px;top:697px;width:144px;height:15px"></div>
<div class="m" style="left:182px;top:697px;width:408px;height:15px"></div>
<div class="m" style="left:591px;top:697px;width:55px;height:15px"></div>
<div class="m" style="left:37px;top:713px;width:123px;height:17px"></div>
<div class="m" style="left:182px;top:713px;width:408px;height:17px"></div>
<div class="m" style="left:656px;top:603px;width:534px;height:15px"></div>
<div class="m" style="left:1191px;top:603px;width:173px;height:31px"></div>
<div class="m" style="left:656px;top:619px;width:89px;height:15px"></div>
<div class="m" style="left:746px;top:619px;width:82px;height:63px"></div>
<div class="m" style="left:829px;top:619px;width:162px;height:15px"></div>
<div class="m" style="left:992px;top:619px;width:87px;height:63px"></div>
<div class="m" style="left:1080px;top:619px;width:110px;height:63px"></div>
<div class="m" style="left:1191px;top:635px;width:76px;height:47px"></div>
<div class="m" style="left:1268px;top:635px;width:96px;height:47px"></div>
<div class="m" style="left:656px;top:635px;width:41px;height:47px"></div>
<div class="m" style="left:698px;top:635px;width:47px;height:47px"></div>
<div class="m" style="left:829px;top:635px;width:80px;height:47px"></div>
<div class="m" style="left:910px;top:635px;width:81px;height:47px"></div>
<div class="m" style="left:656px;top:683px;width:41px;height:13px"></div>
<div class="m" style="left:698px;top:683px;width:47px;height:13px"></div>
<div class="m" style="left:746px;top:683px;width:82px;height:13px"></div>
<div class="m" style="left:829px;top:683px;width:80px;height:13px"></div>
<div class="m" style="left:910px;top:683px;width:81px;height:13px"></div>
<div class="m" style="left:992px;top:683px;width:87px;height:13px"></div>
<div class="m" style="left:1080px;top:683px;width:110px;height:13px"></div>
<div class="m" style="left:1191px;top:683px;width:76px;height:13px"></div>
<div class="m" style="left:1268px;top:683px;width:96px;height:13px"></div>
<div class="m" style="left:656px;top:697px;width:41px;height:15px"></div>
<div class="m" style="left:698px;top:697px;width:47px;height:15px"></div>
<div class="m" style="left:746px;top:697px;width:82px;height:15px"></div>
<div class="m" style="left:829px;top:697px;width:80px;height:15px"></div>
<div class="m" style="left:910px;top:697px;width:81px;height:15px"></div>
<div class="m" style="left:992px;top:697px;width:87px;height:15px"></div>
<div class="m" style="left:1080px;top:697px;width:110px;height:15px"></div>
<div class="m" style="left:1191px;top:697px;width:76px;height:15px"></div>
<div class="m" style="left:1268px;top:697px;width:96px;height:15px"></div>
<div class="m" style="left:656px;top:713px;width:41px;height:17px"></div>
<div class="m" style="left:698px;top:713px;width:47px;height:17px"></div>
<div class="m" style="left:746px;top:713px;width:82px;height:17px"></div>
<div class="m" style="left:829px;top:713px;width:80px;height:17px"></div>
<div class="m" style="left:910px;top:713px;width:81px;height:17px"></div>
<div class="m" style="left:992px;top:713px;width:87px;height:17px"></div>
<div class="m" style="left:1080px;top:713px;width:110px;height:17px"></div>
<div class="m" style="left:1191px;top:713px;width:76px;height:17px"></div>
<div class="m" style="left:1268px;top:713px;width:96px;height:17px"></div>
<div class="m" style="left:656px;top:731px;width:708px;height:23px"></div>
<div class="m" style="left:37px;top:731px;width:609px;height:23px"></div>
<div class="m" style="left:37px;top:755px;width:330px;height:15px"></div>
<div class="m" style="left:368px;top:755px;width:123px;height:15px"></div>
<div class="m" style="left:492px;top:755px;width:154px;height:15px"></div>
<div class="m" style="left:656px;top:755px;width:253px;height:15px"></div>
<div class="m" style="left:910px;top:755px;width:81px;height:15px"></div>
<div class="m" style="left:992px;top:755px;width:87px;height:15px"></div>
<div class="m" style="left:1080px;top:755px;width:110px;height:15px"></div>
<div class="m" style="left:1191px;top:755px;width:173px;height:15px"></div>
<div class="m" style="left:37px;top:771px;width:330px;height:20px"></div>
<div class="m" style="left:368px;top:771px;width:58px;height:20px"></div>
<div class="m" style="left:427px;top:771px;width:64px;height:20px"></div>
<div class="m" style="left:492px;top:771px;width:68px;height:20px"></div>
<div class="m" style="left:561px;top:771px;width:85px;height:20px"></div>
<div class="m" style="left:656px;top:771px;width:253px;height:15px"></div>
<div class="m" style="left:910px;top:771px;width:81px;height:15px"></div>
<div class="m" style="left:992px;top:771px;width:87px;height:15px"></div>
<div class="m" style="left:1080px;top:771px;width:110px;height:15px"></div>
<div class="m" style="left:1191px;top:771px;width:173px;height:15px"></div>
<div class="m" style="left:647px;top:787px;width:717px;height:4px"></div>
<div class="m" style="left:37px;top:792px;width:330px;height:30px"></div>
<div class="m" style="left:368px;top:792px;width:58px;height:30px"></div>
<div class="m" style="left:427px;top:792px;width:64px;height:30px"></div>
<div class="m" style="left:492px;top:792px;width:68px;height:30px"></div>
<div class="m" style="left:561px;top:792px;width:85px;height:30px"></div>
<div class="m" style="left:647px;top:792px;width:241px;height:30px"></div>
<div class="m" style="left:889px;top:792px;width:147px;height:30px"></div>
<div class="m" style="left:1037px;top:792px;width:42px;height:61px"></div>
<div class="m" style="left:1080px;top:792px;width:47px;height:77px"></div>
<div class="m" style="left:1128px;top:792px;width:97px;height:30px"></div>
<div class="m" style="left:1226px;top:792px;width:138px;height:30px"></div>
<div class="m" style="left:37px;top:823px;width:330px;height:30px"></div>
<div class="m" style="left:368px;top:823px;width:58px;height:30px"></div>
<div class="m" style="left:427px;top:823px;width:64px;height:30px"></div>
<div class="m" style="left:492px;top:823px;width:68px;height:30px"></div>
<div class="m" style="left:561px;top:823px;width:85px;height:30px"></div>
<div class="m" style="left:647px;top:823px;width:181px;height:46px"></div>
<div class="m" style="left:829px;top:823px;width:80px;height:30px"></div>
<div class="m" style="left:931px;top:823px;width:148px;height:30px"></div>
<div class="m" style="left:1128px;top:823px;width:236px;height:30px"></div>
<div class="m" style="left:37px;top:854px;width:330px;height:15px"></div>
<div class="m" style="left:368px;top:854px;width:58px;height:15px"></div>
<div class="m" style="left:427px;top:854px;width:64px;height:15px"></div>
<div class="m" style="left:492px;top:854px;width:68px;height:15px"></div>
<div class="m" style="left:561px;top:854px;width:85px;height:15px"></div>
<div class="m" style="left:829px;top:854px;width:80px;height:15px"></div>
<div class="m" style="left:931px;top:854px;width:148px;height:15px"></div>
<div class="m" style="left:1128px;top:854px;width:236px;height:15px"></div>
<div class="m" style="left:37px;top:870px;width:609px;height:15px"></div>
<div class="m" style="left:647px;top:870px;width:207px;height:15px"></div>
<div class="m" style="left:855px;top:870px;width:75px;height:15px"></div>
<div class="m" style="left:1080px;top:870px;width:47px;height:31px"></div>
<div class="m" style="left:647px;top:886px;width:207px;height:15px"></div>
<div class="m" style="left:855px;top:886px;width:75px;height:15px"></div>
<div class="m" style="left:931px;top:886px;width:196px;height:15px"></div>
<div class="m" style="left:1128px;top:886px;width:236px;height:15px"></div>
<div class="m" style="left:37px;top:886px;width:123px;height:15px"></div>
<div class="m" style="left:161px;top:886px;width:227px;height:15px"></div>
<div class="m" style="left:389px;top:886px;width:257px;height:15px"></div>
<div class="m" style="left:37px;top:902px;width:609px;height:15px"></div>
<div class="m" style="left:647px;top:902px;width:207px;height:15px"></div>
<div class="m" style="left:855px;top:902px;width:97px;height:15px"></div>
<div class="m" style="left:992px;top:902px;width:135px;height:99px"></div>
<div class="m" style="left:1128px;top:902px;width:236px;height:15px"></div>
<div class="m" style="left:647px;top:918px;width:207px;height:13px"></div>
<div class="m" style="left:855px;top:918px;width:97px;height:13px"></div>
<div class="m" style="left:1128px;top:918px;width:236px;height:13px"></div>
<div class="m" style="left:37px;top:918px;width:77px;height:13px"></div>
<div class="m" style="left:115px;top:918px;width:87px;height:13px"></div>
<div class="m" style="left:224px;top:918px;width:143px;height:13px"></div>
<div class="m" style="left:368px;top:918px;width:278px;height:30px"></div>
<div class="m" style="left:37px;top:932px;width:77px;height:16px"></div>
<div class="m" style="left:115px;top:932px;width:87px;height:16px"></div>
<div class="m" style="left:224px;top:932px;width:143px;height:16px"></div>
<div class="m" style="left:656px;top:932px;width:89px;height:43px"></div>
<div class="m" style="left:746px;top:932px;width:51px;height:43px"></div>
<div class="m" style="left:1128px;top:932px;width:62px;height:16px"></div>
<div class="m" style="left:1204px;top:932px;width:160px;height:16px"></div>
<div class="m" style="left:829px;top:932px;width:150px;height:43px"></div>
<div class="m" style="left:37px;top:949px;width:165px;height:52px"></div>
<div class="m" style="left:203px;top:949px;width:72px;height:26px"></div>
<div class="m" style="left:310px;top:949px;width:57px;height:26px"></div>
<div class="m" style="left:389px;top:949px;width:129px;height:26px"></div>
<div class="m" style="left:540px;top:949px;width:106px;height:26px"></div>
<div class="m" style="left:203px;top:976px;width:72px;height:25px"></div>
<div class="m" style="left:310px;top:976px;width:57px;height:25px"></div>
<div class="m" style="left:389px;top:976px;width:129px;height:25px"></div>
<div class="m" style="left:540px;top:976px;width:106px;height:25px"></div>
<div class="b" style="left:611px;top:346px;width:87px;height:1px"></div>
<div class="b" style="left:724px;top:346px;width:105px;height:1px"></div>
<div class="b" style="left:139px;top:407px;width:989px;height:1px"></div>
<div class="b" style="left:539px;top:428px;width:108px;height:1px"></div>
<div class="b" style="left:539px;top:412px;width:108px;height:1px"></div>
<div class="b" style="left:539px;top:412px;width:1px;height:17px"></div>
<div class="b" style="left:646px;top:412px;width:1px;height:17px"></div>
<div class="b" style="left:539px;top:539px;width:108px;height:2px"></div>
<div class="b" style="left:539px;top:427px;width:108px;height:2px"></div>
<div class="b" style="left:538px;top:428px;width:2px;height:113px"></div>
<div class="b" style="left:645px;top:428px;width:2px;height:113px"></div>
<div class="b" style="left:539px;top:444px;width:108px;height:1px"></div>
<div class="b" style="left:539px;top:460px;width:108px;height:1px"></div>
<div class="b" style="left:539px;top:476px;width:108px;height:1px"></div>
<div class="b" style="left:539px;top:499px;width:108px;height:1px"></div>
<div class="b" style="left:539px;top:519px;width:108px;height:1px"></div>
<div class="b" style="left:160px;top:499px;width:359px;height:1px"></div>
<div class="b" style="left:223px;top:519px;width:204px;height:1px"></div>
<div class="b" style="left:105px;top:540px;width:322px;height:1px"></div>
<div class="b" style="left:160px;top:582px;width:150px;height:1px"></div>
<div class="b" style="left:367px;top:582px;width:60px;height:1px"></div>
<div class="b" style="left:181px;top:602px;width:208px;height:1px"></div>
<div class="b" style="left:160px;top:634px;width:91px;height:1px"></div>
<div class="b" style="left:309px;top:634px;width:59px;height:1px"></div>
<div class="b" style="left:388px;top:634px;width:83px;height:1px"></div>
<div class="b" style="left:539px;top:681px;width:108px;height:2px"></div>
<div class="b" style="left:539px;top:617px;width:108px;height:2px"></div>
<div class="b" style="left:538px;top:618px;width:2px;height:65px"></div>
<div class="b" style="left:645px;top:618px;width:2px;height:65px"></div>
<div class="b" style="left:539px;top:650px;width:108px;height:1px"></div>
<div class="b" style="left:105px;top:650px;width:56px;height:1px"></div>
<div class="b" style="left:367px;top:650px;width:73px;height:1px"></div>
<div class="b" style="left:105px;top:682px;width:56px;height:1px"></div>
<div class="b" style="left:367px;top:682px;width:73px;height:1px"></div>
<div class="b" style="left:181px;top:712px;width:410px;height:1px"></div>
<div class="b" style="left:181px;top:730px;width:410px;height:1px"></div>
<div class="b" style="left:655px;top:595px;width:710px;height:1px"></div>
<div class="b" style="left:655px;top:428px;width:710px;height:1px"></div>
<div class="b" style="left:655px;top:428px;width:1px;height:168px"></div>
<div class="b" style="left:1364px;top:428px;width:1px;height:168px"></div>
<div class="b" style="left:655px;top:444px;width:710px;height:1px"></div>
<div class="b" style="left:745px;top:460px;width:208px;height:1px"></div>
<div class="b" style="left:655px;top:499px;width:710px;height:1px"></div>
<div class="b" style="left:655px;top:519px;width:91px;height:1px"></div>
<div class="b" style="left:745px;top:518px;width:620px;height:2px"></div>
<div class="b" style="left:655px;top:561px;width:710px;height:1px"></div>
<div class="b" style="left:745px;top:444px;width:1px;height:152px"></div>
<div class="b" style="left:952px;top:444px;width:1px;height:152px"></div>
<div class="b" style="left:1036px;top:444px;width:1px;height:152px"></div>
<div class="b" style="left:1169px;top:444px;width:1px;height:152px"></div>
<div class="b" style="left:797px;top:460px;width:1px;height:136px"></div>
<div class="b" style="left:854px;top:460px;width:1px;height:136px"></div>
<div class="b" style="left:909px;top:460px;width:1px;height:136px"></div>
<div class="b" style="left:744px;top:519px;width:2px;height:77px"></div>
<div class="b" style="left:1363px;top:519px;width:2px;height:77px"></div>
<div class="b" style="left:745px;top:594px;width:620px;height:2px"></div>
<div class="b" style="left:655px;top:499px;width:1px;height:97px"></div>
<div class="b" style="left:655px;top:730px;width:710px;height:1px"></div>
<div class="b" style="left:655px;top:602px;width:710px;height:1px"></div>
<div class="b" style="left:655px;top:602px;width:1px;height:129px"></div>
<div class="b" style="left:1364px;top:602px;width:1px;height:129px"></div>
<div class="b" style="left:655px;top:618px;width:536px;height:1px"></div>
<div class="b" style="left:655px;top:634px;width:91px;height:1px"></div>
<div class="b" style="left:828px;top:634px;width:164px;height:1px"></div>
<div class="b" style="left:1190px;top:634px;width:175px;height:1px"></div>
<div class="b" style="left:655px;top:682px;width:710px;height:1px"></div>
<div class="b" style="left:655px;top:696px;width:43px;height:1px"></div>
<div class="b" style="left:697px;top:695px;width:668px;height:2px"></div>
<div class="b" style="left:655px;top:712px;width:710px;height:1px"></div>
<div class="b" style="left:1190px;top:602px;width:1px;height:129px"></div>
<div class="b" style="left:745px;top:618px;width:1px;height:113px"></div>
<div class="b" style="left:828px;top:618px;width:1px;height:113px"></div>
<div class="b" style="left:991px;top:618px;width:1px;height:113px"></div>
<div class="b" style="left:1079px;top:618px;width:1px;height:113px"></div>
<div class="b" style="left:1267px;top:634px;width:1px;height:97px"></div>
<div class="b" style="left:697px;top:634px;width:1px;height:63px"></div>
<div class="b" style="left:909px;top:634px;width:1px;height:97px"></div>
<div class="b" style="left:696px;top:696px;width:2px;height:35px"></div>
<div class="b" style="left:1363px;top:696px;width:2px;height:35px"></div>
<div class="b" style="left:646px;top:730px;width:1px;height:140px"></div>
<div class="b" style="left:36px;top:869px;width:611px;height:1px"></div>
<div class="b" style="left:36px;top:754px;width:611px;height:1px"></div>
<div class="b" style="left:367px;top:770px;width:280px;height:1px"></div>
<div class="b" style="left:36px;top:791px;width:611px;height:1px"></div>
<div class="b" style="left:36px;top:822px;width:611px;height:1px"></div>
<div class="b" style="left:36px;top:853px;width:611px;height:1px"></div>
<div class="b" style="left:367px;top:754px;width:1px;height:116px"></div>
<div class="b" style="left:491px;top:754px;width:1px;height:116px"></div>
<div class="b" style="left:426px;top:770px;width:1px;height:100px"></div>
<div class="b" style="left:560px;top:770px;width:1px;height:100px"></div>
<div class="b" style="left:655px;top:786px;width:710px;height:1px"></div>
<div class="b" style="left:655px;top:754px;width:710px;height:1px"></div>
<div class="b" style="left:655px;top:754px;width:1px;height:33px"></div>
<div class="b" style="left:1364px;top:754px;width:1px;height:33px"></div>
<div class="b" style="left:655px;top:770px;width:710px;height:1px"></div>
<div class="b" style="left:909px;top:754px;width:1px;height:33px"></div>
<div class="b" style="left:991px;top:754px;width:1px;height:33px"></div>
<div class="b" style="left:1079px;top:754px;width:1px;height:33px"></div>
<div class="b" style="left:1190px;top:754px;width:1px;height:33px"></div>
<div class="b" style="left:888px;top:822px;width:149px;height:1px"></div>
<div class="b" style="left:1225px;top:822px;width:140px;height:1px"></div>
<div class="b" style="left:828px;top:853px;width:82px;height:1px"></div>
<div class="b" style="left:930px;top:853px;width:150px;height:1px"></div>
<div class="b" style="left:1127px;top:853px;width:238px;height:1px"></div>
<div class="b" style="left:854px;top:885px;width:77px;height:1px"></div>
<div class="b" style="left:952px;top:885px;width:128px;height:1px"></div>
<div class="b" style="left:1127px;top:885px;width:238px;height:1px"></div>
<div class="b" style="left:160px;top:901px;width:229px;height:1px"></div>
<div class="b" style="left:854px;top:917px;width:99px;height:1px"></div>
<div class="b" style="left:1127px;top:917px;width:238px;height:1px"></div>
<div class="b" style="left:114px;top:931px;width:89px;height:1px"></div>
<div class="b" style="left:223px;top:931px;width:145px;height:1px"></div>
<div class="b" style="left:1127px;top:948px;width:64px;height:1px"></div>
<div class="b" style="left:1203px;top:948px;width:162px;height:1px"></div>
<div class="b" style="left:36px;top:948px;width:167px;height:1px"></div>
<div class="b" style="left:202px;top:948px;width:1px;height:54px"></div>
<div class="b" style="left:202px;top:975px;width:74px;height:1px"></div>
<div class="b" style="left:309px;top:975px;width:59px;height:1px"></div>
<div class="b" style="left:388px;top:975px;width:131px;height:1px"></div>
<div class="b" style="left:539px;top:975px;width:108px;height:1px"></div>
<div class="b" style="left:745px;top:975px;width:53px;height:1px"></div>
<div class="b" style="left:828px;top:975px;width:152px;height:1px"></div>
<div class="t" style="left:427px;top:294px;width:297px;height:31px;justify-content:center;align-items:flex-end;text-align:center;font-size:19px;font-weight:bold;padding:0 2px;padding-bottom:2.53px;"><span>ПУТЕВОЙ ЛИСТ</span></div>
<div class="t" style="left:326px;top:326px;width:285px;height:20px;justify-content:flex-end;align-items:flex-end;text-align:right;font-size:19.5px;font-weight:bold;padding:0 2px;padding-bottom:2.55px;"><span>грузового автомобиля</span></div>
<div class="t" style="left:698px;top:326px;width:26px;height:20px;justify-content:center;align-items:flex-end;text-align:center;font-size:19px;font-weight:bold;padding:0 2px;padding-bottom:2.53px;"><span>№</span></div>
<div class="t" style="left:37px;top:349px;width:574px;height:21px;justify-content:flex-end;align-items:flex-end;text-align:right;font-size:19.3px;font-weight:bold;padding:0 2px;padding-bottom:2.54px;"><span>срок действия: за период</span></div>
<div class="t" style="left:612px;top:345px;width:276px;height:21px;justify-content:flex-start;align-items:center;text-align:left;font-size:15.8px;font-weight:normal;padding:0 2px;"><span>2025.05.30 00:00 - 2025.06.02 23:59</span></div>
<div class="t" style="left:37px;top:385px;width:102px;height:22px;justify-content:flex-start;align-items:center;text-align:left;font-size:13.5px;font-weight:normal;padding:0 2px;"><span>Организация</span></div>
<div class="t" style="left:140px;top:411px;width:299px;height:36px;justify-content:center;align-items:flex-start;text-align:center;font-size:11.7px;font-weight:normal;padding:0 2px;"><span>наименование, адрес, номер телефона</span></div>
<div class="t" style="left:540px;top:411px;width:106px;height:15px;justify-content:center;align-items:center;text-align:center;font-size:12px;font-weight:normal;padding:0 2px;"><span>Код</span></div>
<div class="t" style="left:440px;top:426px;width:99px;height:15px;justify-content:flex-end;align-items:center;text-align:right;font-size:12px;font-weight:normal;padding:0 2px;"><span>Режим работы</span></div>
<div class="t" style="left:37px;top:442px;width:502px;height:15px;justify-content:flex-end;align-items:center;text-align:right;font-size:12px;font-weight:normal;padding:0 2px;"><span>Колонна</span></div>
<div class="t" style="left:37px;top:458px;width:502px;height:15px;justify-content:flex-end;align-items:center;text-align:right;font-size:12px;font-weight:normal;padding:0 2px;"><span>Бригада</span></div>
<div class="t" style="left:656px;top:429px;width:708px;height:15px;justify-content:center;align-items:center;text-align:center;font-size:14px;font-weight:normal;padding:0 2px;"><span>РАБОТА ВОДИТЕЛЯ И АВТОМОБИЛЯ</span></div>
<div class="t" style="left:656px;top:445px;width:89px;height:54px;justify-content:center;align-items:center;text-align:center;font-size:12px;font-weight:normal;padding:0 2px;"><span>операция</span></div>
<div class="t" style="left:746px;top:445px;width:206px;height:15px;justify-content:center;align-items:center;text-align:center;font-size:12px;font-weight:normal;padding:0 2px;"><span>время по графику</span></div>
<div class="t" style="left:746px;top:461px;width:51px;height:38px;justify-content:center;align-items:center;text-align:center;font-size:12px;font-weight:normal;padding:0 2px;"><span>число</span></div>
<div class="t" style="left:798px;top:461px;width:56px;height:38px;justify-content:center;align-items:center;text-align:center;font-size:12px;font-weight:normal;padding:0 2px;"><span>месяц</span></div>
<div class="t" style="left:855px;top:461px;width:54px;height:38px;justify-content:center;align-items:center;text-align:center;font-size:12px;font-weight:normal;padding:0 2px;"><span>ч</span></div>
<div class="t" style="left:910px;top:461px;width:42px;height:38px;justify-content:center;align-items:center;text-align:center;font-size:12px;font-weight:normal;padding:0 2px;"><span>мин.</span></div>
<div class="t" style="left:953px;top:445px;width:83px;height:54px;justify-content:center;align-items:center;text-align:center;font-size:12px;font-weight:normal;padding:0 2px;line-height:18px;"><span>нулевой<br>пробег,<br>км</span></div>
<div class="t" style="left:1037px;top:445px;width:132px;height:54px;justify-content:center;align-items:center;text-align:center;font-size:12px;font-weight:normal;padding:0 2px;line-height:18px;"><span>показание<br>одометра,<br>км</span></div>
<div class="t" style="left:1170px;top:445px;width:194px;height:54px;justify-content:center;align-items:center;text-align:center;font-size:12px;font-weight:normal;padding:0 2px;line-height:18px;"><span>время фактическое,<br>число, месяц, ч, мин.</span></div>
<div class="t" style="left:656px;top:500px;width:89px;height:19px;justify-content:center;align-items:center;text-align:center;font-size:12px;font-weight:normal;padding:0 2px;"><span>1</span></div>
<div class="t" style="left:746px;top:500px;width:51px;height:19px;justify-content:center;align-items:center;text-align:center;font-size:12px;font-weight:normal;padding:0 2px;"><span>2</span></div>
<div class="t" style="left:798px;top:500px;width:56px;height:19px;justify-content:center;align-items:center;text-align:center;font-size:12px;font-weight:normal;padding:0 2px;"><span>3</span></div>
<div class="t" style="left:855px;top:500px;width:54px;height:19px;justify-content:center;align-items:center;text-align:center;font-size:12px;font-weight:normal;padding:0 2px;"><span>4</span></div>
<div class="t" style="left:910px;top:500px;width:42px;height:19px;justify-content:center;align-items:center;text-align:center;font-size:12px;font-weight:normal;padding:0 2px;"><span>5</span></div>
<div class="t" style="left:953px;top:500px;width:83px;height:19px;justify-content:center;align-items:center;text-align:center;font-size:12px;font-weight:normal;padding:0 2px;"><span>6</span></div>
<div class="t" style="left:1037px;top:500px;width:132px;height:19px;justify-content:center;align-items:center;text-align:center;font-size:12px;font-weight:normal;padding:0 2px;"><span>7</span></div>
<div class="t" style="left:1170px;top:500px;width:194px;height:19px;justify-content:center;align-items:center;text-align:center;font-size:12px;font-weight:normal;padding:0 2px;"><span>8</span></div>
<div class="t" style="left:656px;top:520px;width:89px;height:41px;justify-content:center;align-items:center;text-align:center;font-size:12px;font-weight:normal;padding:0 2px;line-height:18px;"><span>выезд с<br>парковки</span></div>
<div class="t" style="left:656px;top:562px;width:89px;height:33px;justify-content:center;align-items:center;text-align:center;font-size:12px;font-weight:normal;padding:0 2px;line-height:18px;"><span>возвращение<br>на парковку</span></div>
<div class="t" style="left:1037px;top:520px;width:132px;height:41px;justify-content:center;align-items:center;text-align:center;font-size:15.8px;font-weight:normal;padding:0 2px;"><span>86087</span></div>
<div class="t" style="left:1170px;top:520px;width:194px;height:41px;justify-content:flex-start;align-items:center;text-align:left;font-size:15.8px;font-weight:normal;padding:0 2px;"><span>2025-05-30 08:48:32</span></div>
<div class="t" style="left:1037px;top:562px;width:132px;height:33px;justify-content:flex-end;align-items:center;text-align:right;font-size:15.8px;font-weight:normal;padding:0 2px;"><span>86166</span></div>
<div class="t" style="left:1170px;top:562px;width:194px;height:33px;justify-content:flex-start;align-items:center;text-align:left;font-size:15.8px;font-weight:normal;padding:0 2px;"><span>2025-05-31 15:38:07</span></div>
<div class="t" style="left:37px;top:477px;width:123px;height:22px;justify-content:flex-start;align-items:center;text-align:left;font-size:12.2px;font-weight:normal;padding:0 2px;"><span>Марка автомобиля</span></div>
<div class="t" style="left:161px;top:477px;width:357px;height:22px;justify-content:center;align-items:center;text-align:center;font-size:15.8px;font-weight:normal;padding:0 2px;"><span>ЛАРГУС тольятти</span></div>
<div class="t" style="left:37px;top:500px;width:186px;height:19px;justify-content:flex-start;align-items:center;text-align:left;font-size:12px;font-weight:normal;padding:0 2px;"><span>Государственный номерной знак</span></div>
<div class="t" style="left:224px;top:500px;width:202px;height:19px;justify-content:center;align-items:flex-start;text-align:center;font-size:15.8px;font-weight:normal;padding:0 2px;"><span>Е013РЕ163</span></div>
<div class="t" style="left:427px;top:500px;width:112px;height:19px;justify-content:flex-end;align-items:center;text-align:right;font-size:12px;font-weight:normal;padding:0 2px;"><span>Гаражный номер</span></div>
<div class="t" style="left:37px;top:520px;width:68px;height:20px;justify-content:flex-start;align-items:center;text-align:left;font-size:12px;font-weight:normal;padding:0 2px;"><span>Водитель</span></div>
<div class="t" style="left:106px;top:520px;width:320px;height:20px;justify-content:flex-start;align-items:flex-start;text-align:left;font-size:15.9px;font-weight:normal;padding:0 2px;"><span>Владимир Тест</span></div>
<div class="t" style="left:427px;top:520px;width:112px;height:20px;justify-content:flex-end;align-items:center;text-align:right;font-size:12px;font-weight:normal;padding:0 2px;"><span>Табельный номер</span></div>
<div class="t" style="left:106px;top:541px;width:320px;height:20px;justify-content:center;align-items:center;text-align:center;font-size:12px;font-weight:normal;padding:0 2px;"><span>фамилия, имя, отчество</span></div>
<div class="t" style="left:37px;top:562px;width:123px;height:20px;justify-content:flex-start;align-items:center;text-align:left;font-size:12px;font-weight:normal;padding:0 2px;"><span>Удостоверение №</span></div>
<div class="t" style="left:310px;top:562px;width:57px;height:20px;justify-content:center;align-items:center;text-align:center;font-size:12px;font-weight:normal;padding:0 2px;"><span>Класс</span></div>
<div class="t" style="left:368px;top:562px;width:58px;height:20px;justify-content:center;align-items:center;text-align:center;font-size:15.8px;font-weight:normal;padding:0 2px;"><span>A</span></div>
<div class="t" style="left:182px;top:583px;width:206px;height:19px;justify-content:center;align-items:flex-start;text-align:center;font-size:15.8px;font-weight:normal;padding:0 2px;"><span>стандартная, ограниченная</span></div>
<div class="t" style="left:35px;top:596px;width:144px;height:22px;justify-content:center;align-items:center;text-align:center;font-size:12px;font-weight:normal;padding:0 2px;"><span>Лицензионная карточка</span></div>
<div class="t" style="left:182px;top:603px;width:206px;height:15px;justify-content:center;align-items:center;text-align:center;font-size:12px;font-weight:normal;padding:0 2px;"><span>ненужное зачеркнуть</span></div>
<div class="t" style="left:37px;top:617.5px;width:123px;height:15px;justify-content:flex-start;align-items:center;text-align:left;font-size:12px;font-weight:normal;padding:0 2px;"><span>Регистрационный №</span></div>
<div class="t" style="left:251px;top:617px;width:58px;height:15px;justify-content:flex-end;align-items:center;text-align:right;font-size:12px;font-weight:normal;padding:0 2px;"><span>Серия</span></div>
<div class="t" style="left:368px;top:619px;width:20px;height:15px;justify-content:center;align-items:center;text-align:center;font-size:12px;font-weight:normal;padding:0 2px;"><span>№</span></div>
<div class="t" style="left:37px;top:635px;width:68px;height:15px;justify-content:flex-start;align-items:center;text-align:left;font-size:12px;font-weight:normal;padding:0 2px;"><span>Прицеп 1</span></div>
<div class="t" style="left:161px;top:635px;width:206px;height:15px;justify-content:flex-end;align-items:center;text-align:right;font-size:12px;font-weight:normal;padding:0 5px;"><span>Государственный номерной знак</span></div>
<div class="t" style="left:440px;top:635px;width:99px;height:15px;justify-content:flex-end;align-items:center;text-align:right;font-size:12px;font-weight:normal;padding:0 2px;"><span>Гаражный номер</span></div>
<div class="t" style="left:106px;top:651px;width:54px;height:15px;justify-content:center;align-items:center;text-align:center;font-size:12px;font-weight:normal;padding:0 2px;"><span>марка</span></div>
<div class="t" style="left:37px;top:667px;width:68px;height:15px;justify-content:flex-start;align-items:center;text-align:left;font-size:12px;font-weight:normal;padding:0 2px;"><span>Прицеп 2</span></div>
<div class="t" style="left:161px;top:667px;width:206px;height:15px;justify-content:flex-end;align-items:center;text-align:right;font-size:12px;font-weight:normal;padding:0 5px;"><span>Государственный номерной знак</span></div>
<div class="t" style="left:440px;top:667px;width:99px;height:15px;justify-content:flex-end;align-items:center;text-align:right;font-size:12px;font-weight:normal;padding:0 2px;"><span>Гаражный номер</span></div>
<div class="t" style="left:106px;top:683px;width:54px;height:13px;justify-content:center;align-items:center;text-align:center;font-size:12px;font-weight:normal;padding:0 2px;"><span>марка</span></div>
<div class="t" style="left:37px;top:695px;width:144px;height:15px;justify-content:flex-start;align-items:center;text-align:left;font-size:12px;font-weight:normal;padding:0 2px;"><span>Сопровождающие лица:</span></div>
<div class="t" style="left:37px;top:713px;width:123px;height:17px;justify-content:flex-start;align-items:center;text-align:left;font-size:12px;font-weight:normal;padding:0 2px;"><span>Сведения о перевозке:</span></div>
<div class="t" style="left:182px;top:713px;width:408px;height:17px;justify-content:center;align-items:center;text-align:center;font-size:15.8px;font-weight:normal;padding:0 2px;"><span>Для собственных нужд</span></div>
<div class="t" style="left:656px;top:603px;width:534px;height:15px;justify-content:center;align-items:center;text-align:center;font-size:14px;font-weight:normal;padding:0 2px;"><span>Движение горючего</span></div>
<div class="t" style="left:1191px;top:603px;width:173px;height:31px;justify-content:center;align-items:center;text-align:center;font-size:12px;font-weight:normal;padding:0 2px;"><span>Время работы, ч, мин.</span></div>
<div class="t" style="left:656px;top:619px;width:89px;height:15px;justify-content:center;align-items:center;text-align:center;font-size:12px;font-weight:normal;padding:0 2px;"><span>горючее</span></div>
<div class="t" style="left:829px;top:619px;width:162px;height:15px;justify-content:center;align-items:center;text-align:center;font-size:12px;font-weight:normal;padding:0 2px;"><span>остаток при</span></div>
<div class="t" style="left:746px;top:619px;width:82px;height:63px;justify-content:center;align-items:center;text-align:center;font-size:12px;font-weight:normal;padding:0 2px;"><span>выдано, л</span></div>
<div class="t" style="left:992px;top:619px;width:87px;height:63px;justify-content:center;align-items:center;text-align:center;font-size:12px;font-weight:normal;padding:0 2px;"><span>сдано, л</span></div>
<div class="t" style="left:1080px;top:619px;width:110px;height:63px;justify-content:center;align-items:center;text-align:center;font-size:12px;font-weight:normal;padding:0 2px;line-height:18px;"><span>коэффи-циент<br>изменения нормы</span></div>
<div class="t" style="left:656px;top:635px;width:41px;height:47px;justify-content:center;align-items:center;text-align:center;font-size:12px;font-weight:normal;padding:0 2px;"><span>марка</span></div>
<div class="t" style="left:698px;top:635px;width:47px;height:47px;justify-content:center;align-items:center;text-align:center;font-size:12px;font-weight:normal;padding:0 2px;line-height:18px;"><span>код<br>марки</span></div>
<div class="t" style="left:829px;top:635px;width:80px;height:47px;justify-content:center;align-items:center;text-align:center;font-size:12px;font-weight:normal;padding:0 2px;"><span>выезде, л</span></div>
<div class="t" style="left:910px;top:635px;width:81px;height:47px;justify-content:center;align-items:center;text-align:center;font-size:12px;font-weight:normal;padding:0 2px;line-height:18px;"><span>возвра-щении,<br>л</span></div>
<div class="t" style="left:1191px;top:635px;width:76px;height:47px;justify-content:center;align-items:center;text-align:center;font-size:12px;font-weight:normal;padding:0 2px;line-height:18px;"><span>спецобо-<br>рудования</span></div>
<div class="t" style="left:1268px;top:635px;width:96px;height:47px;justify-content:center;align-items:center;text-align:center;font-size:12px;font-weight:normal;padding:0 2px;"><span>двигателя</span></div>
<div class="t" style="left:656px;top:683px;width:41px;height:13px;justify-content:center;align-items:center;text-align:center;font-size:12px;font-weight:normal;padding:0 2px;"><span>9</span></div>
<div class="t" style="left:698px;top:683px;width:47px;height:13px;justify-content:center;align-items:center;text-align:center;font-size:12px;font-weight:normal;padding:0 2px;"><span>10</span></div>
<div class="t" style="left:746px;top:683px;width:82px;height:13px;justify-content:center;align-items:center;text-align:center;font-size:12px;font-weight:normal;padding:0 2px;"><span>11</span></div>
<div class="t" style="left:829px;top:683px;width:80px;height:13px;justify-content:center;align-items:center;text-align:center;font-size:12px;font-weight:normal;padding:0 2px;"><span>12</span></div>
<div class="t" style="left:910px;top:683px;width:81px;height:13px;justify-content:center;align-items:center;text-align:center;font-size:12px;font-weight:normal;padding:0 2px;"><span>13</span></div>
<div class="t" style="left:992px;top:683px;width:87px;height:13px;justify-content:center;align-items:center;text-align:center;font-size:12px;font-weight:normal;padding:0 2px;"><span>14</span></div>
<div class="t" style="left:1080px;top:683px;width:110px;height:13px;justify-content:center;align-items:center;text-align:center;font-size:12px;font-weight:normal;padding:0 2px;"><span>15</span></div>
<div class="t" style="left:1191px;top:683px;width:76px;height:13px;justify-content:center;align-items:center;text-align:center;font-size:12px;font-weight:normal;padding:0 2px;"><span>16</span></div>
<div class="t" style="left:1268px;top:683px;width:96px;height:13px;justify-content:center;align-items:center;text-align:center;font-size:12px;font-weight:normal;padding:0 2px;"><span>17</span></div>
<div class="t" style="left:829px;top:697px;width:80px;height:15px;justify-content:flex-start;align-items:center;text-align:left;font-size:15.8px;font-weight:normal;padding:0 2px;"><span>3</span></div>
<div class="t" style="left:910px;top:697px;width:81px;height:15px;justify-content:flex-start;align-items:center;text-align:left;font-size:15.8px;font-weight:normal;padding:0 2px;"><span>58</span></div>
<div class="t" style="left:1268px;top:697px;width:96px;height:15px;justify-content:flex-start;align-items:center;text-align:left;font-size:15.8px;font-weight:normal;padding:0 2px;"><span>2 ч 54 м 40 с</span></div>
<div class="t" style="left:656px;top:731px;width:708px;height:23px;justify-content:center;align-items:center;text-align:center;font-size:14px;font-weight:normal;padding:0 2px;"><span>ПОДПИСЬ</span></div>
<div class="t" style="left:37px;top:731px;width:609px;height:23px;justify-content:center;align-items:center;text-align:center;font-size:14px;font-weight:normal;padding:0 2px;"><span>ЗАДАНИЕ ВОДИТЕЛЮ</span></div>
<div class="t" style="left:37px;top:755px;width:330px;height:15px;justify-content:center;align-items:center;text-align:center;font-size:12px;font-weight:normal;padding:0 2px;"><span>в чье распоряжение</span></div>
<div class="t" style="left:368px;top:755px;width:123px;height:15px;justify-content:center;align-items:center;text-align:center;font-size:12px;font-weight:normal;padding:0 2px;"><span>время, ч, мин.</span></div>
<div class="t" style="left:492px;top:755px;width:154px;height:15px;justify-content:center;align-items:center;text-align:center;font-size:12px;font-weight:normal;padding:0 2px;"><span>количество</span></div>
<div class="t" style="left:37px;top:771px;width:330px;height:20px;justify-content:center;align-items:center;text-align:center;font-size:12px;font-weight:normal;padding:0 2px;"><span>(наименование и адрес заказчика)</span></div>
<div class="t" style="left:368px;top:771px;width:58px;height:20px;justify-content:center;align-items:center;text-align:center;font-size:12px;font-weight:normal;padding:0 2px;"><span>прибытия</span></div>
<div class="t" style="left:427px;top:771px;width:64px;height:20px;justify-content:center;align-items:center;text-align:center;font-size:12px;font-weight:normal;padding:0 2px;"><span>убытия</span></div>
<div class="t" style="left:492px;top:771px;width:68px;height:20px;justify-content:center;align-items:center;text-align:center;font-size:12px;font-weight:normal;padding:0 2px;"><span>часов</span></div>
<div class="t" style="left:561px;top:771px;width:85px;height:20px;justify-content:center;align-items:center;text-align:center;font-size:12px;font-weight:normal;padding:0 2px;"><span>ездок</span></div>
<div class="t" style="left:656px;top:755px;width:253px;height:15px;justify-content:center;align-items:flex-start;text-align:center;font-size:12px;font-weight:normal;padding:0 2px;"><span>заправщика</span></div>
<div class="t" style="left:910px;top:755px;width:81px;height:15px;justify-content:center;align-items:flex-start;text-align:center;font-size:12px;font-weight:normal;padding:0 2px;"><span>механика</span></div>
<div class="t" style="left:992px;top:755px;width:87px;height:15px;justify-content:center;align-items:flex-start;text-align:center;font-size:12px;font-weight:normal;padding:0 2px;"><span>механика</span></div>
<div class="t" style="left:1080px;top:755px;width:110px;height:15px;justify-content:center;align-items:flex-start;text-align:center;font-size:12px;font-weight:normal;padding:0 2px;"><span>заправщика</span></div>
<div class="t" style="left:1191px;top:755px;width:173px;height:15px;justify-content:center;align-items:flex-start;text-align:center;font-size:12px;font-weight:normal;padding:0 2px;"><span>диспетчера</span></div>
<div class="t" style="left:37px;top:792px;width:330px;height:30px;justify-content:center;align-items:center;text-align:center;font-size:12px;font-weight:normal;padding:0 2px;"><span>18</span></div>
<div class="t" style="left:368px;top:792px;width:58px;height:30px;justify-content:center;align-items:center;text-align:center;font-size:12px;font-weight:normal;padding:0 2px;"><span>19</span></div>
<div class="t" style="left:427px;top:792px;width:64px;height:30px;justify-content:center;align-items:center;text-align:center;font-size:12px;font-weight:normal;padding:0 2px;"><span>20</span></div>
<div class="t" style="left:492px;top:792px;width:68px;height:30px;justify-content:center;align-items:center;text-align:center;font-size:12px;font-weight:normal;padding:0 2px;"><span>21</span></div>
<div class="t" style="left:561px;top:792px;width:85px;height:30px;justify-content:center;align-items:center;text-align:center;font-size:12px;font-weight:normal;padding:0 2px;"><span>22</span></div>
<div class="t" style="left:647px;top:792px;width:241px;height:30px;justify-content:flex-start;align-items:center;text-align:left;font-size:9.7px;font-weight:normal;padding:0 2px;line-height:14px;"><span>Предрейсовый (предсменный) контроль технического<br>состояния ТС</span></div>
<div class="t" style="left:1128px;top:798px;width:97px;height:30px;justify-content:flex-start;align-items:center;text-align:left;font-size:12px;font-weight:normal;padding:0 2px;"><span>Особые отметки:</span></div>
<div class="t" style="left:647px;top:832px;width:181px;height:46px;justify-content:flex-start;align-items:flex-start;text-align:left;font-size:9.6px;font-weight:normal;padding:0 2px;line-height:14px;"><span>Ответственный за техническое состояние<br>и эксплуатацию ТС</span></div>
<div class="t" style="left:1128px;top:823px;width:236px;height:30px;justify-content:center;align-items:flex-end;text-align:center;font-size:12px;font-weight:normal;padding:0 2px;padding-bottom:2.15px;"><span>21.09.2021 05:32:50</span></div>
<div class="t" style="left:829px;top:854px;width:80px;height:15px;justify-content:center;align-items:center;text-align:center;font-size:12px;font-weight:normal;padding:0 2px;"><span>подпись</span></div>
<div class="t" style="left:931px;top:854px;width:148px;height:15px;justify-content:center;align-items:center;text-align:center;font-size:12px;font-weight:normal;padding:0 2px;"><span>расшифровка подписи</span></div>
<div class="t" style="left:1128px;top:854px;width:236px;height:15px;justify-content:flex-start;align-items:center;text-align:left;font-size:12px;font-weight:normal;padding:0 2px;"><span>дата, время</span></div>
<div class="t" style="left:37px;top:870px;width:609px;height:15px;justify-content:flex-start;align-items:center;text-align:left;font-size:12px;font-weight:normal;padding:0 2px;"><span>Водительское удостоверение проверил, задание выдал,</span></div>
<div class="t" style="left:647px;top:870px;width:207px;height:15px;justify-content:center;align-items:center;text-align:center;font-size:12px;font-weight:normal;padding:0 2px;"><span>Автомобиль принял. Водитель</span></div>
<div class="t" style="left:37px;top:886px;width:123px;height:15px;justify-content:flex-start;align-items:center;text-align:left;font-size:12px;font-weight:normal;padding:0 2px;"><span>выдать горючего</span></div>
<div class="t" style="left:389px;top:886px;width:257px;height:15px;justify-content:flex-start;align-items:center;text-align:left;font-size:12px;font-weight:normal;padding:0 2px;"><span>литров</span></div>
<div class="t" style="left:855px;top:886px;width:75px;height:15px;justify-content:center;align-items:center;text-align:center;font-size:12px;font-weight:normal;padding:0 2px;"><span>подпись</span></div>
<div class="t" style="left:931px;top:886px;width:196px;height:15px;justify-content:center;align-items:center;text-align:center;font-size:12px;font-weight:normal;padding:0 2px;"><span>расшифровка подписи</span></div>
<div class="t" style="left:647px;top:902px;width:207px;height:15px;justify-content:center;align-items:center;text-align:center;font-size:12px;font-weight:normal;padding:0 2px;"><span>При возвращении автомобиль</span></div>
<div class="t" style="left:855px;top:902px;width:97px;height:15px;justify-content:center;align-items:center;text-align:center;font-size:12px;font-weight:normal;padding:0 2px;"><span>исправен</span></div>
<div class="t" style="left:855px;top:916px;width:97px;height:13px;justify-content:center;align-items:center;text-align:center;font-size:12px;font-weight:normal;padding:0 2px;text-decoration:line-through;"><span>неисправен</span></div>
<div class="t" style="left:37px;top:916px;width:77px;height:13px;justify-content:flex-start;align-items:center;text-align:left;font-size:12px;font-weight:normal;padding:0 2px;"><span>Диспетчер</span></div>
<div class="t" style="left:115px;top:932px;width:87px;height:16px;justify-content:center;align-items:center;text-align:center;font-size:12px;font-weight:normal;padding:0 2px;"><span>подпись</span></div>
<div class="t" style="left:224px;top:932px;width:143px;height:16px;justify-content:center;align-items:center;text-align:center;font-size:12px;font-weight:normal;padding:0 2px;"><span>расшифровка подписи</span></div>
<div class="t" style="left:656px;top:932px;width:89px;height:43px;justify-content:center;align-items:center;text-align:center;font-size:12px;font-weight:normal;padding:0 2px;"><span>Сдал водитель</span></div>
<div class="t" style="left:829px;top:932px;width:150px;height:43px;justify-content:flex-start;align-items:flex-end;text-align:left;font-size:12px;font-weight:normal;padding:0 2px;padding-bottom:2.15px;"><span>Владимир Тест</span></div>
<div class="t" style="left:992px;top:950px;width:135px;height:69px;justify-content:flex-start;align-items:flex-start;text-align:left;font-size:11.8px;font-weight:normal;padding:0 2px;line-height:18px;"><span>Принял: ответственный<br>за техническое состояние</span></div>
<div class="t" style="left:37px;top:958px;width:165px;height:52px;justify-content:flex-start;align-items:flex-start;text-align:left;font-size:9.85px;font-weight:normal;padding:0 2px;line-height:14px;"><span>Прошел предрейсовый медосмотр, к<br>исполнению трудовых обязанностей</span></div>
<div class="t" style="left:203px;top:976px;width:72px;height:25px;justify-content:center;align-items:flex-start;text-align:center;font-size:12px;font-weight:normal;padding:0 2px;"><span>должность</span></div>
<div class="t" style="left:310px;top:976px;width:57px;height:25px;justify-content:center;align-items:flex-start;text-align:center;font-size:12px;font-weight:normal;padding:0 2px;"><span>подпись</span></div>
<div class="t" style="left:389px;top:976px;width:129px;height:25px;justify-content:center;align-items:flex-start;text-align:center;font-size:12px;font-weight:normal;padding:0 2px;"><span>расшифровка подписи</span></div>
<div style="left:310px;top:619px;width:57px;height:15px;overflow:hidden"><span style="position:absolute;left:5px;top:-4px;font-family:Liberation Serif,serif;font-size:13.6px;line-height:20px;white-space:nowrap;transform:scaleY(1.22);transform-origin:0 100%;color:#000">1345678</span></div>
<div style="left:655px;top:729px;width:711px;height:27px;border:2px solid #107c41;background:transparent"></div>
<div style="left:1361px;top:751px;width:6px;height:6px;background:#107c41;border:1px solid #fff"></div>
</div></div>
<!-- vertical scrollbar -->
<div class="a" style="left:1898px;top:269px;width:20px;height:717px;background:#f0f0f0"></div>
<svg class="a" style="left:1903px;top:273px" width="10" height="9" viewBox="0 0 10 9"><path d="M5 1 L9 8 H1 Z" fill="#6e6e6e"/></svg>
<div class="a" style="left:1905px;top:287px;width:9px;height:140px;background:#6e6e6e;border-radius:5px"></div>
<svg class="a" style="left:1903px;top:976px" width="10" height="9" viewBox="0 0 10 9"><path d="M5 8 L9 1 H1 Z" fill="#6e6e6e"/></svg>
<!-- sheet tabs -->
<div class="a" style="left:0;top:986px;width:1918px;height:32px;background:#f0f0f0"></div>
<svg class="a" style="left:28px;top:995px" width="8" height="13" viewBox="0 0 8 13"><path d="M7 1 L1.5 6.5 L7 12" stroke="#a0a0a0" stroke-width="1.2" fill="none"/></svg>
<svg class="a" style="left:60px;top:995px" width="8" height="13" viewBox="0 0 8 13"><path d="M1 1 L6.5 6.5 L1 12" stroke="#a0a0a0" stroke-width="1.2" fill="none"/></svg>
<div class="a" style="left:116px;top:985px;width:114px;height:29px;background:#fafafa;border-radius:0 0 6px 6px;box-shadow:0 1px 1px rgba(0,0,0,0.08)"></div>
<div class="a" style="left:125px;top:992px;font-size:13px;font-weight:bold;color:#242424;white-space:nowrap">Путевой лист 1</div>
<div class="a" style="left:124px;top:1008px;width:98px;height:2px;background:#107c41"></div>
<div class="a" style="left:234px;top:994px;width:1px;height:17px;background:#c8c8c8"></div>
<div class="a" style="left:247px;top:994px;font-size:13.4px;color:#242424;white-space:nowrap">Таблица 1</div>
<div class="a" style="left:324px;top:994px;width:1px;height:17px;background:#c8c8c8"></div>
<svg class="a" style="left:365px;top:995px" width="13" height="13" viewBox="0 0 13 13"><path d="M6.5 0.5 V12.5 M0.5 6.5 H12.5" stroke="#a0a0a0" stroke-width="1.2"/></svg>
<svg class="a" style="left:1153px;top:995px" width="4" height="14" viewBox="0 0 4 14"><circle cx="2" cy="2" r="1.1" fill="#333"/><circle cx="2" cy="7" r="1.1" fill="#333"/><circle cx="2" cy="12" r="1.1" fill="#333"/></svg>
<div class="a" style="left:1171px;top:991px;width:729px;height:21px;background:#f5f5f5;border-radius:10px"></div>
<svg class="a" style="left:1175px;top:996px" width="9" height="10" viewBox="0 0 9 10"><path d="M1 5 L8 1 V9 Z" fill="#6e6e6e"/></svg>
<div class="a" style="left:1188px;top:997px;width:687px;height:10px;background:#6e6e6e;border-radius:5px"></div>
<svg class="a" style="left:1888px;top:996px" width="9" height="10" viewBox="0 0 9 10"><path d="M8 5 L1 1 V9 Z" fill="#6e6e6e"/></svg>
<!-- status bar -->
<div class="a" style="left:0;top:1018px;width:1918px;height:22px;background:#f3f3f3"></div>
<div class="a" style="left:11px;top:1023px;font-size:11.7px;color:#242424">Готово</div>
<svg class="a" style="left:67px;top:1021px" width="17" height="16" viewBox="0 0 17 16"><circle cx="7.2" cy="3.2" r="1.5" stroke="#222" stroke-width="1" fill="none"/><path d="M1.3 4.6 C2.5 6 4.5 6.3 5.9 5.4 M8.5 5.4 C10 6.3 11.8 5.8 12.6 4 M5.9 5.4 Q5.4 9.5 5.9 11.8 Q4.2 12.8 3.4 14.3 Q4.6 14.7 5.6 14 M8.5 5.4 Q8.8 8 8.1 10" stroke="#222" stroke-width="1" fill="none"/><path d="M8.4 11.9 L10.5 14.4 L15.5 9.4" stroke="#222" stroke-width="1" fill="none"/></svg>
<div class="a" style="left:1617px;top:1019px;width:40px;height:21px;background:#e0e0e0"></div>
<svg class="a" style="left:1629px;top:1021px" width="15" height="15" viewBox="0 0 15 15"><path d="M1 1 H14 V14 H1 Z M1 5.33 H14 M1 9.66 H14 M5.33 1 V14 M9.66 1 V14" stroke="#222" stroke-width="1.05" fill="none"/></svg>
<svg class="a" style="left:1669px;top:1021px" width="15" height="15" viewBox="0 0 15 15"><rect x="0.8" y="1" width="13.4" height="13" stroke="#222" stroke-width="1.05" fill="none"/><rect x="3.3" y="3.3" width="8.4" height="8.4" stroke="#222" stroke-width="1" fill="none"/><path d="M5 5.5 H10 M5 7.5 H10 M5 9.5 H10" stroke="#222" stroke-width="0.9"/></svg>
<svg class="a" style="left:1710px;top:1021px" width="15" height="15" viewBox="0 0 15 15"><rect x="0.6" y="1" width="13.6" height="13" stroke="#b8b8b8" stroke-width="1" fill="none"/><path d="M4.4 1 V7 H8.6 V1 M0.6 7 H4.4" stroke="#b8b8b8" stroke-width="1" fill="none"/></svg>
<div class="a" style="left:1742px;top:1028px;width:9px;height:1.3px;background:#333"></div>
<div class="a" style="left:1756px;top:1029px;width:100px;height:1px;background:#555"></div>
<div class="a" style="left:1806px;top:1027px;width:1px;height:5px;background:#555"></div>
<div class="a" style="left:1809px;top:1023px;width:5px;height:13px;background:#555;border-radius:1px"></div>
<svg class="a" style="left:1861px;top:1025px" width="9" height="9" viewBox="0 0 9 9"><path d="M4.5 0 V9 M0 4.5 H9" stroke="#333" stroke-width="1"/></svg>
<div class="a" style="left:1882px;top:1023px;font-size:11px;color:#242424;white-space:nowrap">130 %</div>
</body></html>
